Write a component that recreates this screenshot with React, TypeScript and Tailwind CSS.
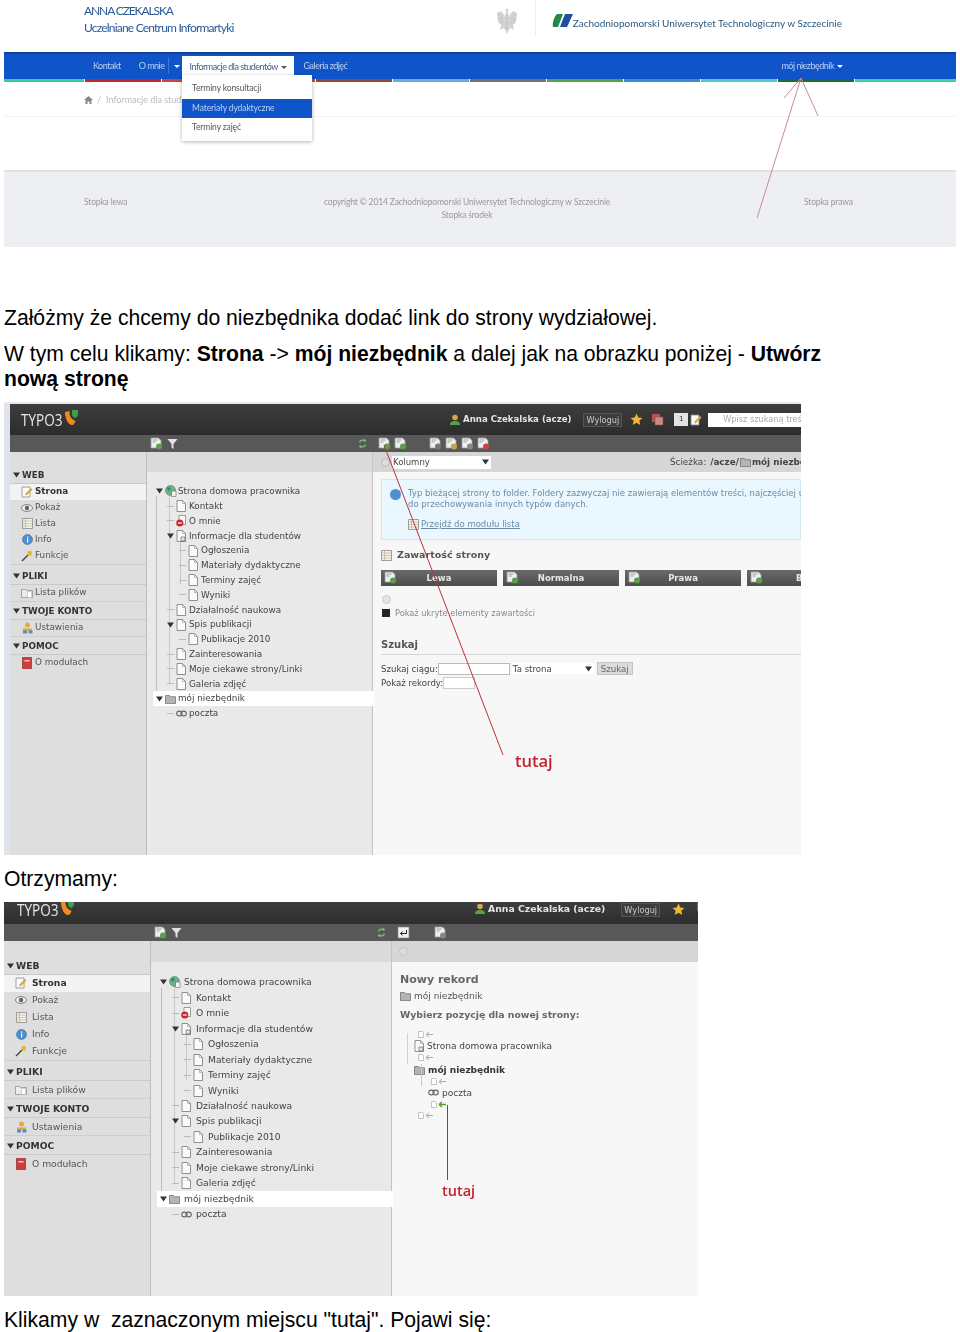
import type { ReactNode } from "react";

const sans = "font-['DejaVu_Sans',Verdana,sans-serif]";

const Page = ({ fold = false }: { fold?: boolean }) => (
    <svg width="10" height="12" viewBox="0 0 10 12" className="shrink-0">
        <path d="M1 .5h5.500L9.500 3.500v8H1z" fill="#fafafa" stroke="#777" strokeWidth=".8" />
        <path d="M6.500.5v3h3" fill="none" stroke="#999" strokeWidth=".7" />
        {fold && <path d="M5 7h4v4H5z" fill="#dfe6ea" stroke="#557" strokeWidth=".6" />}
    </svg>
);

const Folder = () => (
    <svg width="11" height="10" viewBox="0 0 11 10" className="shrink-0">
        <path d="M.5 1.500h4l1 1.200h5v7h-10z" fill="#b4b4b0" stroke="#666" strokeWidth=".7" />
    </svg>
);

const Globe = () => (
    <svg width="12" height="12" viewBox="0 0 12 12" className="shrink-0">
        <circle cx="5.500" cy="5.500" r="5" fill="#6fb08c" stroke="#43806a" strokeWidth=".6" />
        <path d="M2 3l3-1 1 2-3 2zM6 7l3-1 1 1-3 3z" fill="#2f8f4f" />
        <path d="M6.500 6h4.500v5.500H6.500z" fill="#f4f4f4" stroke="#667" strokeWidth=".6" />
    </svg>
);

const Blocked = () => (
    <svg width="10" height="12" viewBox="0 0 10 12" className="shrink-0">
        <path d="M3 .5h6.500v9H3z" fill="#fafafa" stroke="#777" strokeWidth=".7" />
        <circle cx="3.800" cy="8" r="3.600" fill="#c8282a" />
        <path d="M1.800 7.400h4v1.200h-4z" fill="#fff" />
    </svg>
);

const LinkIcon = () => (
    <svg width="11" height="7" viewBox="0 0 11 7" className="shrink-0">
        <ellipse cx="3.400" cy="3.500" rx="2.700" ry="2.400" fill="none" stroke="#666" strokeWidth="1.100" />
        <ellipse cx="7.600" cy="3.500" rx="2.700" ry="2.400" fill="none" stroke="#666" strokeWidth="1.100" />
    </svg>
);

const Tri = () => (
    <svg width="7" height="6" viewBox="0 0 7 6" className="shrink-0">
        <path d="M0 .5h7L3.500 5.500z" fill="#333" />
    </svg>
);

const Mini = ({ c = "#5a9f4a", badge = true }: { c?: string; badge?: boolean }) => (
    <svg width="13" height="13" viewBox="0 0 13 13" className="shrink-0">
        <path d="M1 1h7.500L11 3.500V11H1z" fill="#eef0ee" stroke="#999" strokeWidth=".8" />
        <path d="M2.500 3h5M2.500 5h3" stroke="#8a9a8a" strokeWidth=".9" />
        {badge && <circle cx="9" cy="9.500" r="3" fill={c} />}
    </svg>
);

const Funnel = () => (
    <svg width="11" height="12" viewBox="0 0 11 12" className="shrink-0">
        <path d="M.5 1h10L6.500 6v5l-2-1.500V6z" fill="#e2e2e2" />
    </svg>
);

const Refresh = () => (
    <svg width="9" height="11" viewBox="0 0 9 11" className="shrink-0">
        <path d="M1.500 4.500C2 2.500 4 1.500 6.500 2.500M7.500 6.500C7 8.500 5 9.500 2.500 8.500" fill="none" stroke="#6fc36f" strokeWidth="1.400" />
        <path d="M6 .5l2.500 2.500L5.500 4zM3 10.500L.5 8l3-1z" fill="#6fc36f" />
    </svg>
);

const Stack = () => (
    <svg width="13" height="13" viewBox="0 0 13 13" className="shrink-0">
        <path d="M1 1h8v8H1z" fill="#b9534f" />
        <path d="M4 4h8v8H4z" fill="#c98a80" stroke="#8a4a44" strokeWidth=".6" />
    </svg>
);

const ReturnIcon = () => (
    <svg width="13" height="13" viewBox="0 0 13 13" className="shrink-0">
        <path d="M1 1h11v11H1z" fill="#f2f2f2" stroke="#888" strokeWidth=".7" />
        <path d="M9.500 4v3.500H3.500M5.500 5.500l-2 2 2 2" fill="none" stroke="#222" strokeWidth="1" />
    </svg>
);

const Typo3 = () => (
    <div className="flex items-start">
        <span className="inline-block w-[41px] origin-left scale-x-[0.8] font-['Open_Sans',sans-serif] text-[17px] leading-none text-[#e8e8e8]">TYPO3</span>
        <svg width="18" height="18" viewBox="0 0 18 18" className="ml-[1px] -mt-[2px]">
            <path d="M2 3c0 6 3 13 7 13 1.500 0 3-2 3.500-4C8 10 6 7 6.500 2z" fill="#f08a24" />
            <path d="M9 1h6v4c0 2-1.500 3.500-3 4-1.500-.5-3-2-3-4z" fill="#3f9f4c" />
        </svg>
    </div>
);

const sideSections = [
    { h: "WEB", items: [["Strona", "edit"], ["Pokaż", "eye"], ["Lista", "list"], ["Info", "info"], ["Funkcje", "wand"]] },
    { h: "PLIKI", items: [["Lista plików", "files"]] },
    { h: "TWOJE KONTO", items: [["Ustawienia", "user"]] },
    { h: "POMOC", items: [["O modułach", "book"]] },
];

const SideIcon = ({ k }: { k: string }) => {
    if (k === "edit")
        return (
            <svg width="12" height="12" viewBox="0 0 12 12" className="shrink-0">
                <path d="M1 1h8v10H1z" fill="#fafafa" stroke="#888" strokeWidth=".8" />
                <path d="M4 8l6-6 1.500 1.500-6 6z" fill="#d9a62e" />
            </svg>
        );
    if (k === "eye")
        return (
            <svg width="12" height="8" viewBox="0 0 12 8" className="shrink-0">
                <ellipse cx="6" cy="4" rx="5.500" ry="3.400" fill="#f2f2f2" stroke="#666" strokeWidth=".8" />
                <circle cx="6" cy="4" r="2.200" fill="#666" />
            </svg>
        );
    if (k === "list")
        return (
            <svg width="11" height="11" viewBox="0 0 11 11" className="shrink-0">
                <path d="M.5.5h10v10H.5z" fill="#f6f2e6" stroke="#888" strokeWidth=".8" />
                <path d="M.5 3h10M.5 5.500h10M.5 8h10M3.500.5v10" stroke="#b7a98a" strokeWidth=".6" />
            </svg>
        );
    if (k === "info")
        return (
            <svg width="11" height="11" viewBox="0 0 11 11" className="shrink-0">
                <circle cx="5.500" cy="5.500" r="5" fill="#4f8fcf" stroke="#3a6ea5" strokeWidth=".6" />
                <path d="M5 2.500h1.200v1.200H5zM5 4.500h1.200v4H5z" fill="#fff" />
            </svg>
        );
    if (k === "wand")
        return (
            <svg width="12" height="12" viewBox="0 0 12 12" className="shrink-0">
                <path d="M1 11l6-6" stroke="#444" strokeWidth="1.400" />
                <path d="M7 1l4 .5L10 6 6.500 5z" fill="#e3b32c" />
            </svg>
        );
    if (k === "files")
        return (
            <svg width="12" height="10" viewBox="0 0 12 10" className="shrink-0">
                <path d="M.5 1.500h4l1 1h6v7H.5z" fill="#ececec" stroke="#888" strokeWidth=".7" />
                <path d="M6.500 3.500h4v6h-4z" fill="#fff" stroke="#aaa" strokeWidth=".5" />
            </svg>
        );
    if (k === "user")
        return (
            <svg width="11" height="12" viewBox="0 0 11 12" className="shrink-0">
                <circle cx="5.500" cy="3" r="2.500" fill="#e6a93a" />
                <path d="M1 6.500h9V9H1z" fill="#e6a93a" />
                <path d="M1 8.500h4v3H1z" fill="#4f8fcf" />
                <path d="M6.500 8.500h4v3h-4z" fill="#4f8fcf" />
            </svg>
        );
    return (
        <svg width="10" height="12" viewBox="0 0 10 12" className="shrink-0">
            <path d="M.5.5h9v11h-9z" fill="#cf3d3d" stroke="#8f2a2a" strokeWidth=".7" />
            <path d="M2.500 3h5v1.500h-5z" fill="#f4c9c9" />
        </svg>
    );
};

type V = {
    sideW: string; sidePt: string; row: string; font: string; gap: string; firstGap: string;
    rowH: string; treePt: string; iconBox: string; lv: string[]; vlineA: string; vlineB: string; vlineC: string;
};

const v2: V = {
    sideW: "w-[137px]", sidePt: "pt-[15.500px]", row: "h-[16px]", font: "text-[8.800px]", gap: "gap-[2px]", firstGap: "pt-[4px]",
    rowH: "h-[14.800px]", treePt: "pt-[12px]", iconBox: "w-[13px]",
    lv: ["pl-[18px]", "pl-[29px]", "pl-[41px]"],
    vlineA: "left-[9px] top-[24px] h-[199px]", vlineB: "left-[22px] top-[24px] h-[188px]", vlineC: "left-[33px] top-[68px] h-[44px]",
};

const v3: V = {
    sideW: "w-[147px]", sidePt: "pt-[16.500px]", row: "h-[17px]", font: "text-[9.200px]", gap: "gap-[5px]", firstGap: "pt-[3.500px]",
    rowH: "h-[15.470px]", treePt: "pt-[12.500px]", iconBox: "w-[15px]",
    lv: ["pl-[18px]", "pl-[30px]", "pl-[42px]"],
    vlineA: "left-[10px] top-[26px] h-[208px]", vlineB: "left-[23px] top-[26px] h-[195px]", vlineC: "left-[35px] top-[72px] h-[46px]",
};

const Sidebar = ({ v }: { v: V }) => (
    <div className={`${v.sideW} ${v.sidePt} shrink-0 bg-[#dedede] border-r border-[#bcbcbc] ${sans} ${v.font} text-[#555]`}>
        {sideSections.map((s, i) => (
            <div key={s.h} className={i === 0 ? "" : `border-t border-[#cfcfcf] ${i === 1 ? v.firstGap : "pt-[2px]"}`}>
                <div className={`${v.row} flex items-center gap-[2px] pl-[3px] font-bold text-[#333] border-b border-[#c9c9c9]`}>
                    <Tri />
                    {s.h}
                </div>
                {s.items.map(([t, k]) => (
                    <div key={t} className={`${v.row} flex items-center pl-[11px] ${v.gap} ${t === "Strona" ? "bg-[#f3f3f3] font-bold text-[#333]" : ""}`}>
                        <span className="w-[12px] flex justify-center"><SideIcon k={k} /></span>
                        {t}
                    </div>
                ))}
            </div>
        ))}
    </div>
);

const treeRows = [
    { t: "Strona domowa pracownika", l: 0, i: "globe", a: true },
    { t: "Kontakt", l: 1, i: "page" },
    { t: "O mnie", l: 1, i: "block" },
    { t: "Informacje dla studentów", l: 1, i: "fold", a: true },
    { t: "Ogłoszenia", l: 2, i: "page" },
    { t: "Materiały dydaktyczne", l: 2, i: "page" },
    { t: "Terminy zajęć", l: 2, i: "page" },
    { t: "Wyniki", l: 2, i: "page" },
    { t: "Działalność naukowa", l: 1, i: "page" },
    { t: "Spis publikacji", l: 1, i: "page", a: true },
    { t: "Publikacje 2010", l: 2, i: "page" },
    { t: "Zainteresowania", l: 1, i: "page" },
    { t: "Moje ciekawe strony/Linki", l: 1, i: "page" },
    { t: "Galeria zdjęć", l: 1, i: "page" },
    { t: "mój niezbędnik", l: 0, i: "folder", a: true, sel: true },
    { t: "poczta", l: 1, i: "link" },
];

const TreeIcon = ({ k }: { k: string }) => {
    if (k === "globe") return <Globe />;
    if (k === "block") return <Blocked />;
    if (k === "fold") return <Page fold />;
    if (k === "folder") return <Folder />;
    if (k === "link") return <LinkIcon />;
    return <Page />;
};

const PageTree = ({ v, w, tail }: { v: V; w: string; tail: ReactNode }) => (
    <div className={`${w} shrink-0 bg-[#e9e9e9] border-r border-[#c4c4c4] flex flex-col`}>
        {tail}
        <div className={`relative flex-1 ${v.treePt} ${sans} ${v.font} text-[#444]`}>
            <div className={`absolute w-px bg-[#bdbdbd] ${v.vlineA}`} />
            <div className={`absolute w-px bg-[#c8c8c8] ${v.vlineB}`} />
            <div className={`absolute w-px bg-[#c8c8c8] ${v.vlineC}`} />
            {treeRows.map((r) => (
                <div key={r.t} className={`relative ${v.rowH} flex items-center whitespace-nowrap ${v.lv[r.l]} ${r.sel ? "bg-white ml-[6px] -mr-[2px]" : ""}`}>
                    <span className={`${r.a ? "" : "border-t border-[#bbb]"} w-[7px] -ml-[9px] mr-[2px] flex ${r.sel ? "-translate-x-[6px]" : ""}`}>
                        {r.a && <Tri />}
                    </span>
                    <span className={`${v.iconBox} shrink-0 flex ${r.sel ? "-translate-x-[6px]" : ""}`}><TreeIcon k={r.i} /></span>
                    <span className={r.sel ? "-translate-x-[6px]" : ""}>{r.t}</span>
                </div>
            ))}
        </div>
    </div>
);

const UserTop = ({ cls, logout, star }: { cls: string; logout: string; star: string }) => (
    <div className={`flex items-center ${sans} ${cls}`}>
        <svg width="12" height="12" viewBox="0 0 12 12" className="shrink-0 mr-[2px]">
            <circle cx="6" cy="3.500" r="2.800" fill="#d9a741" />
            <path d="M1 11c0-3 2-4 5-4s5 1 5 4z" fill="#5c9f4c" />
        </svg>
        <span className="font-bold text-[#e4e4e4] whitespace-nowrap">Anna Czekalska (acze)</span>
        <span className={`${logout} px-[2px] leading-[12px] border border-[#555] bg-[#3d3d3d] text-[#c8c8c8] text-[8.200px]`}>Wyloguj</span>
        <svg width="13" height="13" viewBox="0 0 13 13" className={`${star} shrink-0`}>
            <path d="M6.500.5l1.800 4 4.200.4-3.200 2.800 1 4.300-3.800-2.300-3.800 2.300 1-4.300L.5 4.900l4.200-.4z" fill="#f2b632" />
        </svg>
    </div>
);

const Shot2Right = () => (
    <div className={`flex-1 min-w-0 bg-[#f7f7f7] overflow-hidden ${sans} text-[#555] leading-[12px]`}>
        <div className="h-[20px] bg-[#d6d6d6] flex items-center pl-[8px]">
            <span className="w-[9px] h-[9px] rounded-full bg-[#dcdcdc] border border-[#bbb] shrink-0" />
            <div className="ml-[2px] w-[99px] h-[13px] bg-white flex items-center justify-between px-[1px] text-[8.500px] text-[#444] shrink-0">
                Kolumny
                <span className="mr-[1px]"><Tri /></span>
            </div>
            <span className="ml-[179px] text-[8.800px] text-[#444] whitespace-nowrap flex items-center gap-[1px]">
                Ścieżka: <b className="ml-[3px]">/acze/</b><Folder /><b>mój niezbędnik</b>
            </span>
        </div>
        <div className="ml-[8px] mt-[7px] h-[61px] bg-[#eaf7ff] border border-[#d3e6f0] pl-[8px] pt-[8px] text-[8.500px] text-[#6b8ba3] whitespace-nowrap relative">
            <span className="absolute left-[8px] top-[9px] w-[11px] h-[11px] rounded-full bg-[#4f8fcf]" />
            <p className="pl-[18px] leading-[10.500px]">Typ bieżącej strony to folder. Foldery zazwyczaj nie zawierają elementów treści, najczęściej używane są</p>
            <p className="pl-[18px] leading-[10.500px]">do przechowywania innych typów danych.</p>
            <p className="pl-[18px] mt-[10px] leading-[10.500px] flex items-center gap-[2px]"><SideIcon k="list" /><span className="underline">Przejdź do modułu lista</span></p>
        </div>
        <div className="ml-[8px] mt-[9px] flex items-center gap-[5px] h-[12px] font-bold text-[9.500px]">
            <SideIcon k="list" /> Zawartość strony
        </div>
        <div className="ml-[8px] mt-[9px] flex gap-[6px] w-[500px]">
            {["Lewa", "Normalna", "Prawa", "Bok"].map((c) => (
                <div key={c} className="relative w-[116px] h-[16px] shrink-0 bg-gradient-to-b from-[#6a6a6a] to-[#4d4d4d] text-[#e8e8e8] font-bold text-[8.500px] flex items-center justify-center">
                    <span className="absolute left-[3px] top-[1px]"><Mini /></span>
                    {c}
                </div>
            ))}
        </div>
        <div className="ml-[9px] mt-[9px] w-[9px] h-[9px] rounded-full bg-[#e4e4e4] border border-[#ccc]" />
        <div className="ml-[9px] mt-[3px] h-[12px] flex items-center gap-[5px] text-[8.200px] text-[#888] whitespace-nowrap">
            <span className="w-[8px] h-[8px] bg-[#222] shrink-0" /> Pokaż ukryte elementy zawartości
        </div>
        <div className="ml-[8px] mt-[20px] pb-[3px] border-b border-[#d6d6d6] font-bold text-[10px] leading-[12px]">Szukaj</div>
        <div className="ml-[8px] mt-[7px] flex items-center h-[13px] text-[8.600px] text-[#444] whitespace-nowrap">
            Szukaj ciągu:
            <span className="w-[72px] h-[12px] bg-white border border-[#bbb] shrink-0" />
            <span className="ml-[2px] w-[82px] h-[11px] bg-white flex items-center justify-between pl-[1px] pr-[2px]">Ta strona <Tri /></span>
            <span className="ml-[3px] px-[3px] h-[13px] bg-[#dcdcdc] border border-[#c4c4c4] text-[#666] flex items-center">Szukaj</span>
        </div>
        <div className="ml-[8px] mt-[1px] flex items-center h-[13px] text-[8.600px] text-[#444] whitespace-nowrap">
            Pokaż rekordy:
            <span className="w-[32px] h-[12px] bg-white border border-[#ccc] shrink-0" />
        </div>
    </div>
);

const Small = ({ ml, green }: { ml: string; green?: boolean }) => (
    <div className={`h-[11.600px] flex items-center gap-[1px] ${ml}`}>
        <svg width="15" height="7" viewBox="0 0 15 7">
            <path d="M.5.5h4l1 1v5h-5z" fill="#fff" stroke="#aaa" strokeWidth=".7" />
            <path d="M8 3.500h7M8 3.500l3-2.500M8 3.500l3 2.500" stroke={green ? "#5a9f20" : "#aaa"} strokeWidth={green ? 1.300 : 1} fill="none" />
        </svg>
    </div>
);

const Shot3Right = () => (
    <div className={`flex-1 min-w-0 bg-[#f7f7f7] overflow-hidden ${sans} text-[#555]`}>
        <div className="h-[21px] bg-[#d6d6d6] flex items-center pl-[7px]">
            <span className="w-[9px] h-[9px] rounded-full bg-[#dcdcdc] border border-[#c2c2c2]" />
        </div>
        <div className="pl-[8px] pt-[11px]">
            <h2 className="font-bold text-[11px] leading-[14px] text-[#666]">Nowy rekord</h2>
            <div className="mt-[2px] flex items-center gap-[3px] text-[9px] leading-[14px] text-[#555]"><Folder /> mój niezbędnik</div>
            <h3 className="mt-[5px] font-bold text-[9.300px] leading-[14px] text-[#666] whitespace-nowrap">Wybierz pozycję dla nowej strony:</h3>
            <div className="relative mt-[7px] text-[9px] text-[#444] whitespace-nowrap">
                <div className="absolute left-[7px] top-[4px] h-[31px] w-px bg-[#d0d0d0]" />
                <div className="absolute left-[21px] top-[35px] h-[22px] w-px bg-[#c8c8c8]" />
                <Small ml="ml-[18px]" />
                <div className="h-[11.600px] flex items-center gap-[3px] ml-[14px]"><Page fold />Strona domowa pracownika</div>
                <Small ml="ml-[18px]" />
                <div className="h-[11.600px] flex items-center gap-[3px] ml-[14px] font-bold text-[#333]"><Folder />mój niezbędnik</div>
                <Small ml="ml-[31px]" />
                <div className="h-[11.600px] flex items-center gap-[3px] ml-[28px]"><LinkIcon />poczta</div>
                <Small ml="ml-[31px]" green />
                <Small ml="ml-[18px]" />
            </div>
        </div>
    </div>
);

const stripes = ["bg-[#3ac9a0]", "bg-[#c0272d]", "bg-[#c84545]", "bg-[#c84545]", "bg-[#8b4a3a]", "bg-[#6fa8dc]", "bg-[#77706c]", "bg-[#5aa04a]", "bg-[#3d8ac9]", "bg-[#55c4cc]", "bg-[#1e6b3a]", "bg-[#40d0a0]"];

const Caret = ({ c }: { c: string }) => <span className={`border-x-[3px] border-t-[3px] border-x-transparent ${c}`} />;

const Eagle = () => (
    <svg width="24" height="28" viewBox="0 0 24 28" className="ml-auto -mt-[10px]">
        <path d="M12 1l2 3h-4zM12 4c2 1 2 4 1 6l5-6 4 2-1 9-3 3 1 5-4-2-3 6-3-6-4 2 1-5-3-3-1-9 4-2 5 6c-1-2-1-5 1-6z" fill="#d4d4d4" />
        <path d="M3 7l5 5M21 7l-5 5M3 11l5 3M21 11l-5 3M5 16l4-1M19 16l-4-1M12 8v12M10 21l4 0" stroke="#a8a8a8" strokeWidth=".9" strokeDasharray="1 1" fill="none" />
    </svg>
);

const WebsiteShot = () => (
    <div className="relative h-[247px] font-['Lato',sans-serif] leading-normal">
        <div className="h-[52px] flex items-center pl-[80px] pr-[114px]">
            <div className="text-[#2a5a96] text-[12px] leading-[17px] -mt-[14px]">
                <p className="tracking-[-1.100px]">ANNA CZEKALSKA</p>
                <p className="tracking-[-0.800px]">Uczelniane Centrum Informartyki</p>
            </div>
            <Eagle />
            <div className="ml-[16px] w-px h-[36px] bg-[#eee] -mt-[16px]" />
            <svg width="21" height="15" viewBox="0 0 21 15" className="ml-[16px] -mt-[12px]">
                <path d="M5 1h6L6 14H1C0 10 2 4 5 1z" fill="#1f8a4c" />
                <path d="M13 1h8L15 14H8z" fill="#1f4fa0" />
            </svg>
            <span className="text-[#2a5a80] text-[10px] -mt-[6px] whitespace-nowrap">Zachodniopomorski Uniwersytet Technologiczny w Szczecinie</span>
        </div>
        <div className="h-[27px] bg-[#0f55c9] border-t-2 border-[#14418f] flex items-center pl-[89px] pr-[113px] pb-px text-[9px] tracking-[-0.500px] text-[#b9d0f2]">
            <span>Kontakt</span>
            <span className="ml-[18px]">O mnie</span>
            <span className="ml-[3px] pl-[5px] border-l border-[#3f78d8] h-[16px] flex items-center"><Caret c="border-t-white" /></span>
            <span className="ml-[2px] h-[23px] mt-[2px] w-[112px] pl-[8px] bg-white text-[#3d5f8f] flex items-center gap-[3px] whitespace-nowrap">Informacje dla studentów <Caret c="border-t-[#555]" /></span>
            <span className="ml-[10px]">Galeria zdjęć</span>
            <span className="ml-auto flex items-center gap-[3px]">mój niezbędnik <Caret c="border-t-white" /></span>
        </div>
        <div className="flex gap-px h-[3px]">
            {stripes.map((c, i) => (
                <div key={c + i} className={`${c} ${i === 0 ? "w-[80px]" : i === 11 ? "flex-1" : "w-[76px]"}`} />
            ))}
        </div>
        <div className="h-[35px] pt-[2px] border-b border-[#f3f3f3] flex items-center pl-[80px] text-[9px] text-[#bbb] gap-[3px]">
            <svg width="9" height="8" viewBox="0 0 9 8"><path d="M4.500 0L9 4H7.500v4H5.500V5.500h-2V8h-2V4H0z" fill="#888" /></svg>
            <span className="ml-[1px]">/</span>
            <span className="ml-[2px]">Informacje dla studentów</span>
        </div>
        <div className="h-[53px]" />
        <div className="h-[77px] bg-[#eeeff2] border-t-2 border-[#dfe0e2] grid grid-cols-[206px_1fr_232px] pt-[24px] text-[8.500px] leading-[13px] text-[#999] tracking-[-0.150px]">
            <span className="pl-[80px]">Stopka lewa</span>
            <p className="text-center whitespace-nowrap">copyright © 2014 Zachodniopomorski Uniwersytet Technologiczny w Szczecinie<br />Stopka środek</p>
            <span className="pl-[80px]">Stopka prawa</span>
        </div>
        {/* menu */}
        <div className="absolute left-[178px] top-[75px] w-[130px] h-[66px] bg-white shadow-[0_1px_4px_rgba(0,0,0,0.3)] pt-[4px] text-[8.500px] tracking-[-0.100px] text-[#555]">
            <div className="h-[19.500px] pl-[10px] flex items-center">Terminy konsultacji</div>
            <div className="h-[19.500px] pl-[10px] flex items-center bg-[#0f55c9] text-[#b9d0f2]">Materiały dydaktyczne</div>
            <div className="h-[19.500px] pl-[10px] flex items-center">Terminy zajęć</div>
        </div>
        <svg width="952" height="247" className="absolute left-0 top-0 pointer-events-none">
            <path d="M753 218L797 78M797 78L780 98M797 78L814 116" stroke="#c98a8f" strokeWidth="1" fill="none" />
        </svg>
    </div>
);

const Shot2 = () => (
    <div className="relative w-[797px] h-[453px] overflow-hidden border-t-2 border-[#e8e8ee] bg-[#f7f7f7]">
        <div className="flex h-full border-l-[6px] border-[#dfe3ea]">
            <div className="flex-1 min-w-0 flex flex-col">
                <div className="h-[31px] bg-gradient-to-b from-[#3d3d3d] to-[#2d2d2d] flex items-center pl-[11px] overflow-hidden">
                    <Typo3 />
                    <UserTop cls="ml-[368px] text-[8.600px]" logout="ml-[12px]" star="ml-[8px]" />
                    <span className="ml-[8px]"><Stack /></span>
                    <span className="ml-[10px] w-[14px] h-[13px] bg-[#e4e4e4] text-[8px] text-[#333] flex items-center justify-center shrink-0">1</span>
                    <span className="ml-[2px]"><SideIcon k="edit" /></span>
                    <span className="ml-[6px] w-[95px] h-[14px] bg-white text-[8.200px] text-[#aaa] font-['DejaVu_Sans',sans-serif] whitespace-nowrap flex items-center pl-[15px] shrink-0">Wpisz szukaną treść</span>
                </div>
                <div className="h-[17px] bg-[#585858] flex items-center">
                    <div className="w-[137px] shrink-0" />
                    <div className="w-[226px] shrink-0 flex items-center px-[3px] gap-[4px]">
                        <Mini /><Funnel /><span className="ml-auto mr-[3px]"><Refresh /></span>
                    </div>
                    <div className="flex items-center pl-[5px] gap-[3px]">
                        <Mini /><Mini />
                        <span className="w-[16px]" />
                        <Mini c="#777" /><Mini c="#c9a34a" /><Mini c="#888" /><Mini c="#c9443f" />
                    </div>
                </div>
                <div className="flex flex-1">
                    <Sidebar v={v2} />
                    <PageTree v={v2} w="w-[226px]" tail={<div className="h-[20px] bg-[#dadada]" />} />
                    <Shot2Right />
                </div>
            </div>
        </div>
        <svg width="797" height="453" className="absolute left-0 top-0 pointer-events-none">
            <path d="M380 41L499 351" stroke="#b8333b" strokeWidth="1" fill="none" />
        </svg>
        <span className="absolute left-[511px] top-[347px] font-['Open_Sans',sans-serif] font-semibold text-[16.500px] leading-[20px] text-[#c4202c]">tutaj</span>
    </div>
);

const Shot3 = () => (
    <div className="relative w-[694px] h-[394px] overflow-hidden flex flex-col bg-[#f7f7f7] leading-[12px]">
        <div className="h-[22px] bg-gradient-to-b from-[#3d3d3d] to-[#2d2d2d] flex items-start pl-[13px] overflow-hidden">
            <div className="-mt-px"><Typo3 /></div>
            <UserTop cls="ml-[397px] text-[9.300px] -mt-[2px]" logout="ml-[16px] mt-[3px]" star="ml-[12px] mt-[1px]" />
            <span className="ml-[11px]"><Stack /></span>
        </div>
        <div className="h-[17px] bg-[#585858] flex items-center">
            <div className="w-[147px] shrink-0" />
            <div className="w-[241px] shrink-0 flex items-center px-[3px] gap-[4px]">
                <Mini /><Funnel /><span className="ml-auto mr-[3px]"><Refresh /></span>
            </div>
            <div className="flex items-center pl-[5px]">
                <ReturnIcon /><span className="w-[24px]" /><Mini c="#888" />
            </div>
        </div>
        <div className="flex flex-1">
            <Sidebar v={v3} />
            <PageTree v={v3} w="w-[241px]" tail={<div className="h-[21px] bg-[#dadada]" />} />
            <Shot3Right />
        </div>
        <svg width="694" height="394" className="absolute left-0 top-0 pointer-events-none">
            <path d="M443.500 203V278" stroke="#a8323c" strokeWidth="1" fill="none" />
        </svg>
        <span className="absolute left-[438px] top-[279px] font-['Open_Sans',sans-serif] font-semibold text-[14.500px] leading-[20px] text-[#c4202c]">tutaj</span>
    </div>
);

const App = () => (
    <div className="w-[960px] h-[1332px] overflow-hidden bg-white px-[4px] font-['Liberation_Sans',Arial,sans-serif] text-[21.150px] leading-[24.500px] text-black">
        <div className="blur-[0.3px]"><WebsiteShot /></div>
        <p className="mt-[59px] whitespace-nowrap">Załóżmy że chcemy do niezbędnika dodać link do strony wydziałowej.</p>
        <p className="mt-[11.500px] w-[850px]">W tym celu klikamy: <b>Strona</b> -&gt; <b>mój niezbędnik</b> a dalej jak na obrazku poniżej - <b>Utwórz nową stronę</b></p>
        <div className="mt-[11px] blur-[0.3px]"><Shot2 /></div>
        <p className="mt-[12px]">Otrzymamy:</p>
        <div className="mt-[10.500px] blur-[0.3px]"><Shot3 /></div>
        <p className="mt-[12px] whitespace-pre">Klikamy w  zaznaczonym miejscu "tutaj". Pojawi się:</p>
    </div>
);

export default App;
